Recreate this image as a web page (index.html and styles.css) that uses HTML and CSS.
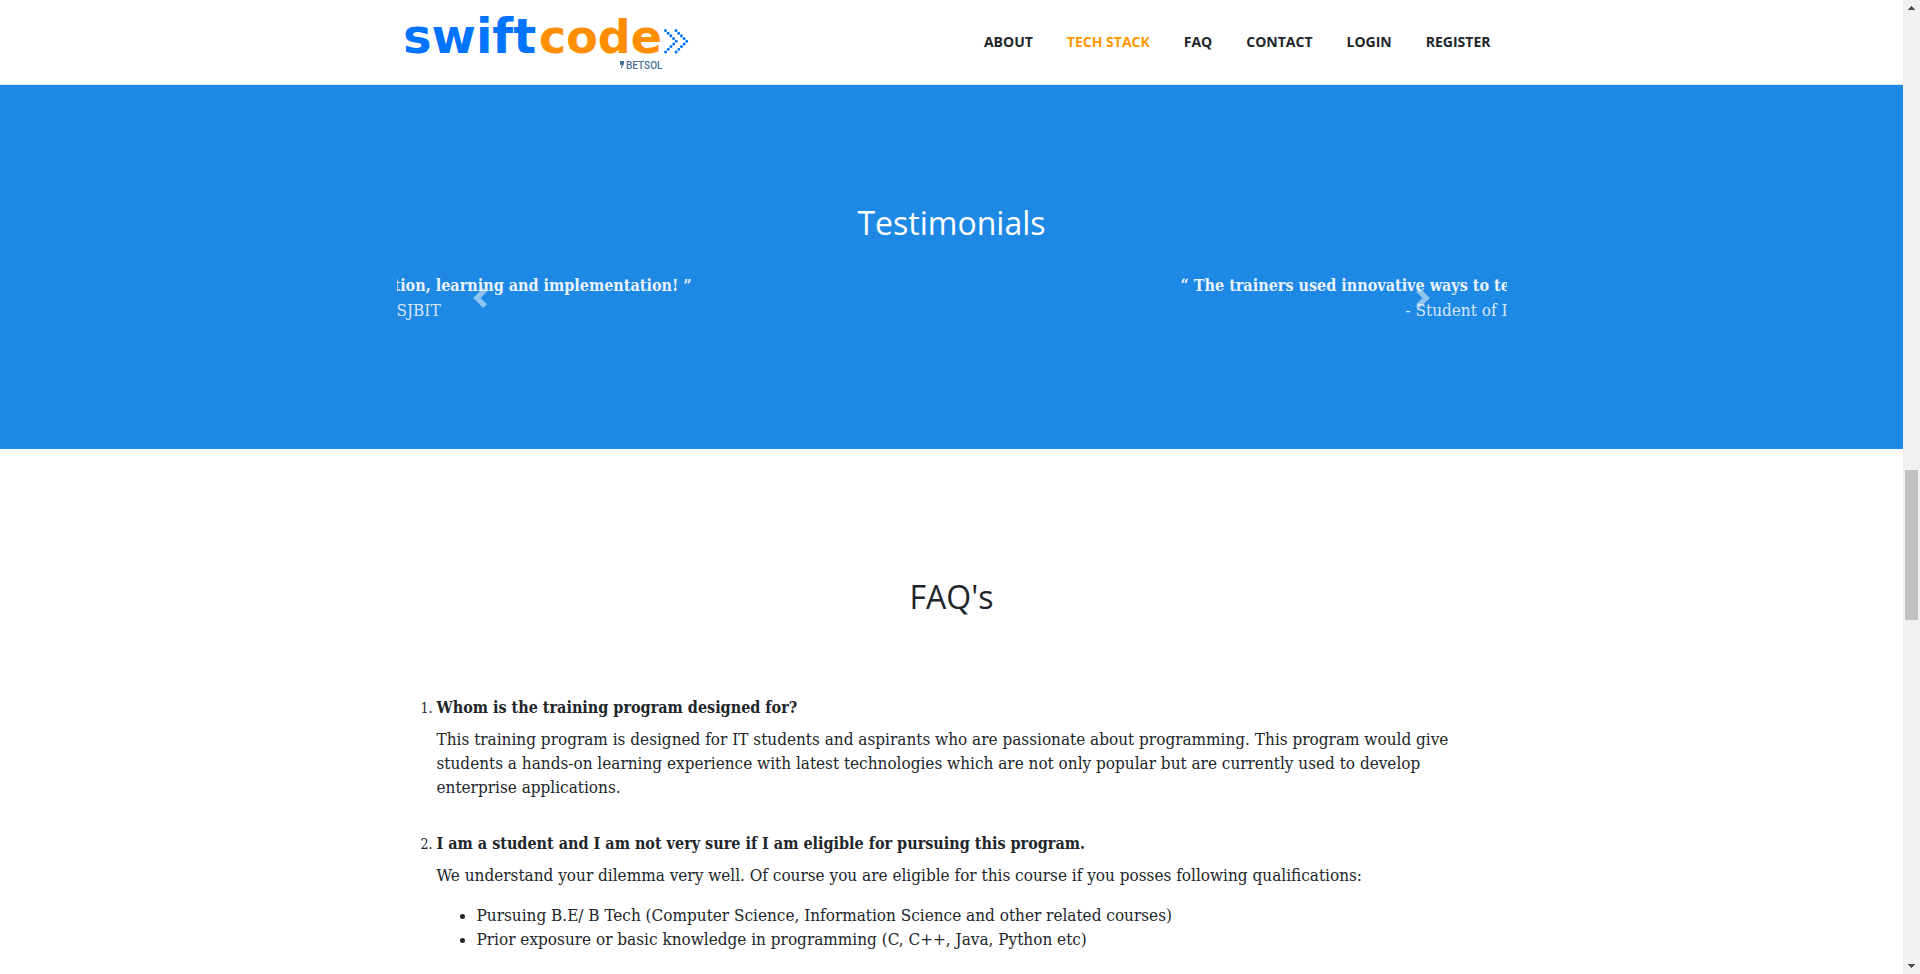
FILE: index.html
```html
<!DOCTYPE html>
<html lang="en">
<head>
<meta charset="utf-8">
<title>SwiftCode by Betsol</title>
<link rel="stylesheet" href="styles.css">
</head>
<body>
<div class="window">
  <div class="page">
    <header class="site-header">
      <div class="container header-row">
        <a class="brand" href="#top" aria-label="SwiftCode by Betsol">
          <svg class="logo" width="300" height="84" viewBox="0 0 300 84">
            <text class="word word-swift" x="6" y="53">swift</text>
            <text class="word word-code" x="142" y="53">code</text>
            <g class="dots">
              <path d="M268.500 30.500l10.800 10.800-10.800 10.800"/>
              <path d="M279 30.500l10.800 10.800-10.800 10.800"/>
            </g>
            <path class="betsol-mark" d="M223 61h4v3l-3 5v-2l1-2h-2v-3z"/>
            <text class="betsol" x="229" y="69">BETSOL</text>
          </svg>
        </a>
        <nav class="nav" aria-label="Main">
          <a href="#about">ABOUT</a>
          <a class="active" href="#tech">TECH STACK</a>
          <a href="#faq">FAQ</a>
          <a href="#contact">CONTACT</a>
          <a href="#login">LOGIN</a>
          <a href="#register">REGISTER</a>
        </nav>
      </div>
    </header>
    <main>
      <section class="testimonials">
        <div class="container">
          <h2>Testimonials</h2>
          <div class="carousel">
            <div class="slides">
              <div class="slide slide-current">
                <p class="quote">tion, learning and implementation! ”</p>
                <p class="author">SJBIT</p>
              </div>
              <div class="slide slide-next">
                <p class="quote">“ The trainers used innovative ways to te</p>
                <p class="author">- Student of I</p>
              </div>
            </div>
            <button class="control control-prev" type="button" aria-label="Previous">
              <svg width="20" height="20" viewBox="0 0 8 8"><path d="M5.250 0l-4 4 4 4 1.500-1.500L4.250 4l2.500-2.500L5.250 0z"/></svg>
            </button>
            <button class="control control-next" type="button" aria-label="Next">
              <svg width="20" height="20" viewBox="0 0 8 8"><path d="M2.750 0l-1.500 1.500L3.750 4l-2.500 2.500L2.750 8l4-4-4-4z"/></svg>
            </button>
          </div>
        </div>
      </section>
      <section class="faq" id="faq">
        <div class="container">
          <h2>FAQ's</h2>
          <ol class="questions">
            <li>
              <h3>Whom is the training program designed for?</h3>
              <p>This training program is designed for IT students and aspirants who are passionate about programming. This program would give students a hands-on learning experience with latest technologies which are not only popular but are currently used to develop enterprise applications.</p>
            </li>
            <li>
              <h3>I am a student and I am not very sure if I am eligible for pursuing this program.</h3>
              <p>We understand your dilemma very well. Of course you are eligible for this course if you posses following qualifications:</p>
              <ul>
                <li>Pursuing B.E/ B Tech (Computer Science, Information Science and other related courses)</li>
                <li>Prior exposure or basic knowledge in programming (C, C++, Java, Python etc)</li>
              </ul>
            </li>
          </ol>
        </div>
      </section>
    </main>
  </div>
  <div class="scrollbar" aria-hidden="true">
    <svg width="17" height="17" viewBox="0 0 17 17"><path d="M8 6h1v1h1v1h1v1h1v1H5V9h1V8h1V7h1z"/></svg>
    <div class="track"><div class="thumb"></div></div>
    <svg width="17" height="17" viewBox="0 0 17 17"><path d="M5 7h7v1h-1v1h-1v1H9v1H8v-1H7V9H6V8H5z"/></svg>
  </div>
</div>
</body>
</html>
```
FILE: styles.css
```css
* { box-sizing: border-box; }

body {
  margin: 0;
  color: #212529;
  background: #fff;
  font: 17px/24px "DejaVu Serif Condensed", "DejaVu Serif", serif;
}

h2, h3, p, ol, ul { margin: 0; }

.window {
  display: grid;
  grid-template-columns: minmax(0, 1fr) 17px;
  height: 100vh;
  overflow: hidden;
}

.page { overflow: hidden; }

.container {
  max-width: 1140px;
  margin: 0 auto;
  padding: 0 15px;
}

.site-header { border-bottom: 1px solid #e5e5e5; }

.header-row {
  display: flex;
  justify-content: space-between;
  align-items: center;
}

.brand { line-height: 0; }

.word { font: bold 46px "DejaVu Sans", sans-serif; }
.word-swift { font-size: 48px; fill: #0073ff; }
.word-code { fill: #ff8f00; }
.betsol { font: 500 10px Roboto, sans-serif; fill: #47719b; }
.betsol-mark { fill: #47719b; }

.dots {
  fill: none;
  stroke: #0073ff;
  stroke-width: 3;
  stroke-linecap: round;
  stroke-dasharray: 0 3.8;
}

.nav {
  display: flex;
  gap: 34px;
  padding-right: 16px;
  font: bold 14px/20px "Open Sans", sans-serif;
}

.nav a { color: #212529; text-decoration: none; }
.nav .active { color: #ff9800; }

h2 {
  font: 32px/40px "Open Sans", sans-serif;
  text-align: center;
}

.testimonials {
  padding: 118px 0 127px;
  color: #fff;
  background: #1e88e5;
}

.carousel {
  position: relative;
  margin-top: 31px;
}

.slides {
  display: flex;
  justify-content: space-between;
  overflow: hidden;
  white-space: nowrap;
}

.slide-current { margin-left: -3px; }
.slide-current .author { padding-left: 3px; }
.slide-next { width: 326px; }
.slide-next .author { padding-left: 225px; }
.quote { font-size: 16px; font-weight: bold; opacity: .9; }
.author { opacity: .8; }

.control {
  position: absolute;
  top: 0;
  bottom: 0;
  display: flex;
  align-items: center;
  justify-content: center;
  width: 15%;
  padding: 0;
  border: 0;
  background: none;
  opacity: .5;
}

.control svg { fill: #fff; }
.control-prev { left: 0; }
.control-next { right: 0; }

.faq { padding: 128px 0; }

.questions {
  margin-top: 79px;
  padding: 0 16px 0 40px;
}

.questions > li { margin-bottom: 33px; }
.questions > li::marker { font-size: 14px; }
.questions h3 { margin-bottom: 7px; font-size: 16px; line-height: 24px; }
.questions ul { margin-top: 16px; padding-left: 40px; list-style: disc; }

.scrollbar {
  display: flex;
  flex-direction: column;
  background: #f1f1f1;
}

.scrollbar svg { fill: #505050; }

.track {
  flex: 1;
  padding: 453px 2px 0;
}

.thumb { height: 150px; background: #c1c1c1; }
```
